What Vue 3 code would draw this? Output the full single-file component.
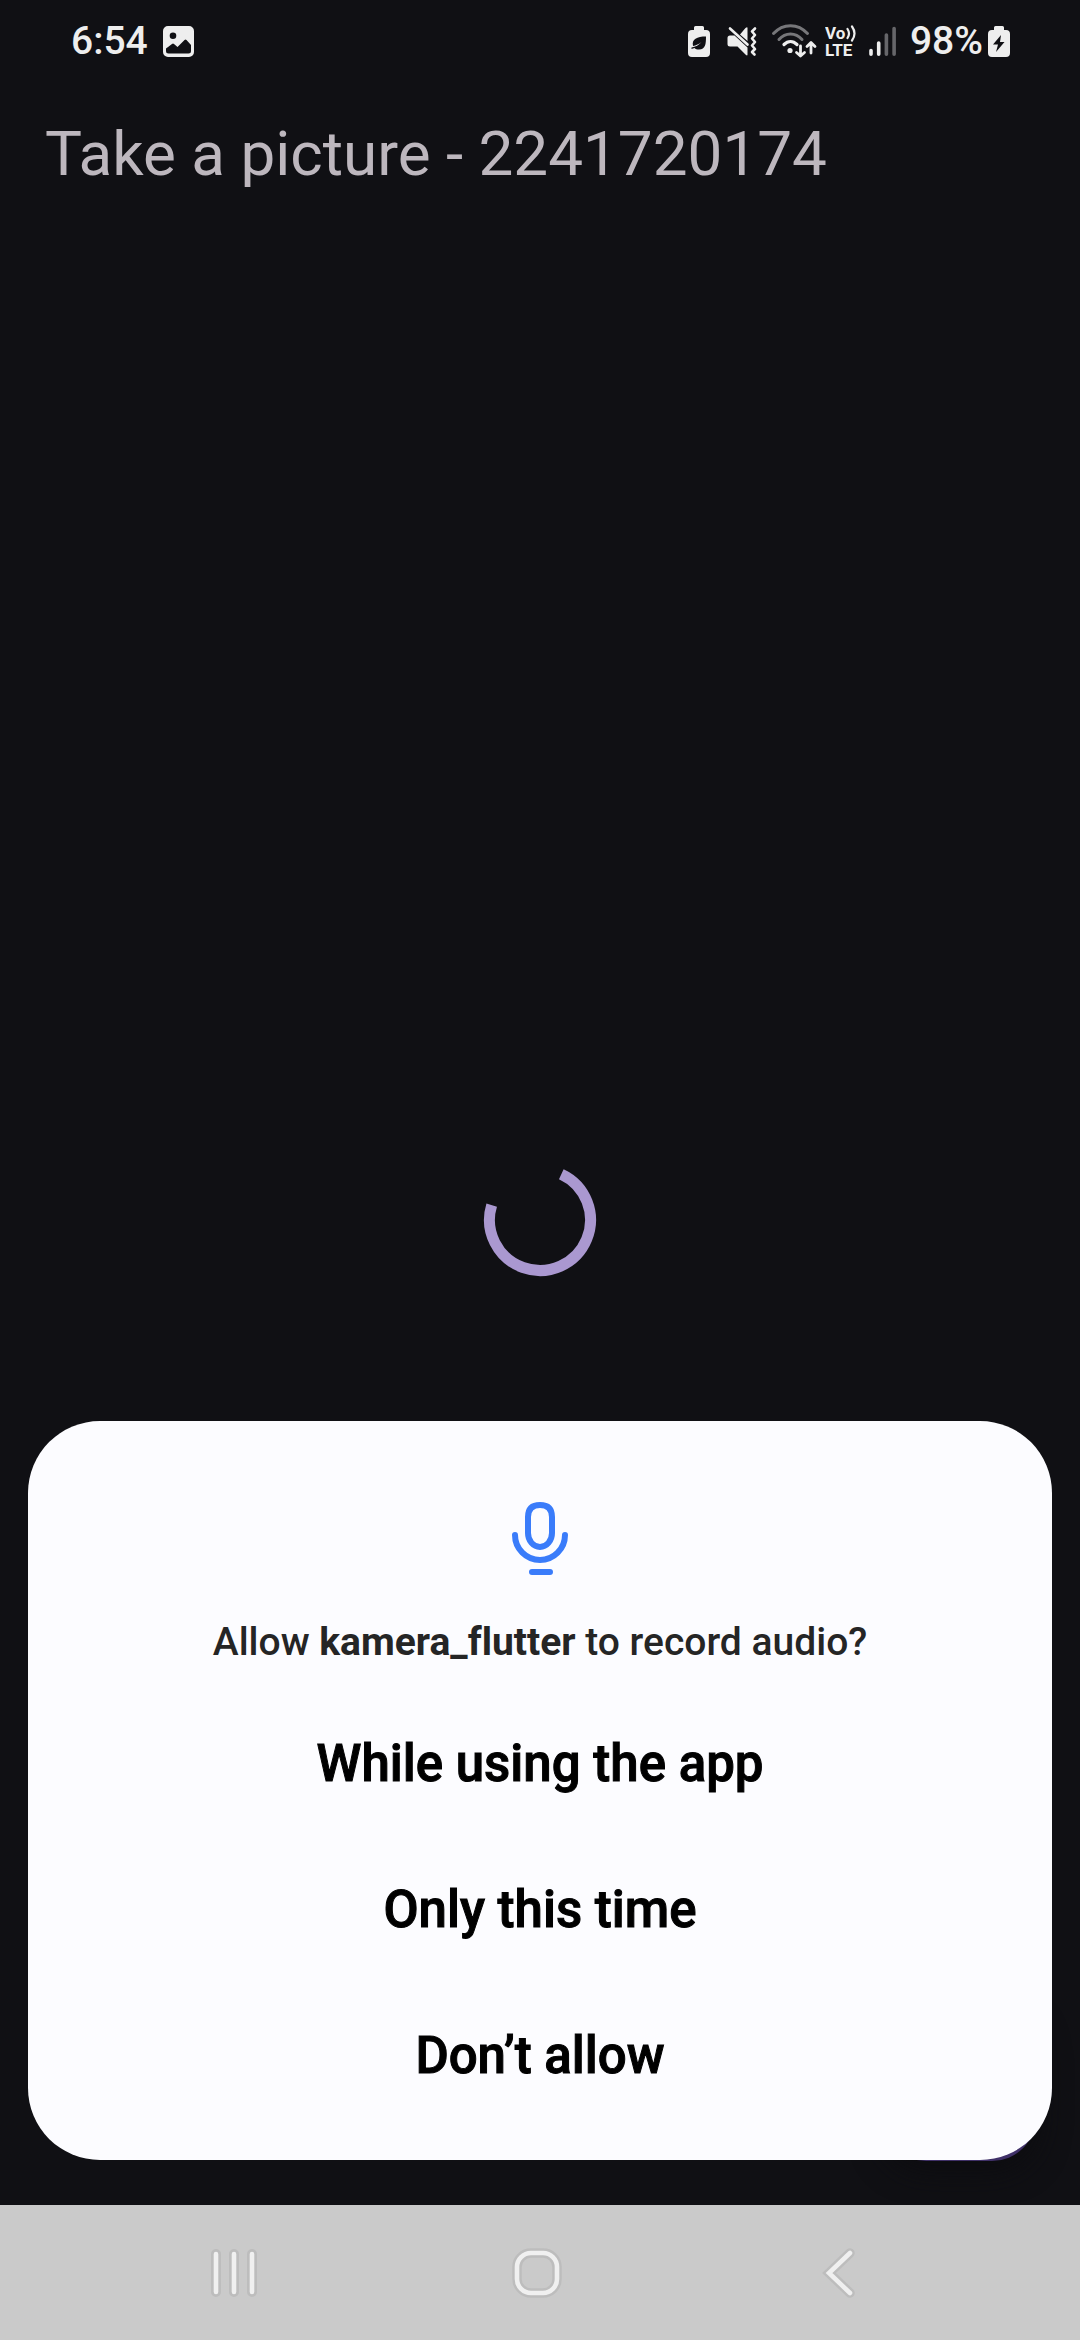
<script setup>
const choices = ['While using the app', 'Only this time', 'Don’t allow']
</script>

<template>
  <div class="screen">
    <header class="status">
      <div class="group">
        <time class="clock">6:54</time>
        <svg class="photo" width="31" height="31" viewBox="0 0 31 31" aria-hidden="true">
          <path fill="#eeeeee" fill-rule="evenodd" d="M5 0H26A5 5 0 0 1 31 5V26A5 5 0 0 1 26 31H5A5 5 0 0 1 0 26V5A5 5 0 0 1 5 0ZM10 6.500A3.300 3.300 0 1 0 10 13.100A3.300 3.300 0 1 0 10 6.500ZM3 22.500V25A2.500 2.500 0 0 0 5.500 27.500H25.500A2.500 2.500 0 0 0 28 25V19L23.500 14Q22.500 13 21.500 14L14.500 21L11 18Q10 17 9 18Z" />
        </svg>
      </div>
      <div class="group">
        <svg class="saver" width="22" height="33" viewBox="0 0 22 33" aria-hidden="true">
          <path fill="#eeeeee" d="M7.500 1H14.500Q16 1 16 2.500V5H18A4 4 0 0 1 22 9V28A4 4 0 0 1 18 32H4A4 4 0 0 1 0 28V9A4 4 0 0 1 4 5H6V2.500Q6 1 7.500 1Z" />
          <path fill="#101014" d="M18 11.500C18 19 17.500 24.500 11 24.500C9 24.500 7.500 24 6.500 23L3.500 24V22.500C7.500 22 11 20 13.500 17C11 19 8 20.500 5 21C3.500 14 9 11.500 18 11.500Z" />
        </svg>
        <svg class="mute" width="30" height="31" viewBox="0 0 30 31" aria-hidden="true">
          <path fill="#eeeeee" d="M20.500 2V15L13 8.500L18.500 2Q20.500 0.500 20.500 2ZM3 9.500H7.500L20.500 21.500V28.500Q20.500 30 19 29L10.500 20.500H3Q0.500 20.500 0.500 18V12Q0.500 9.500 3 9.500Z" />
          <path d="M3 2.500L20.500 18.500" fill="none" stroke="#eeeeee" stroke-width="2.600" stroke-linecap="round" />
          <path d="M28 2.500L25 5.500L28 9L25 12.500L28 16L25 19.500L28 23L25 26L27.500 28.500" fill="none" stroke="#eeeeee" stroke-width="2.600" stroke-linecap="round" stroke-linejoin="round" />
        </svg>
        <svg class="wifi" width="46" height="34" viewBox="0 0 46 34" fill="none" stroke-linecap="round" stroke-linejoin="round" aria-hidden="true">
          <path d="M2.500 9.500C12 -1 27 -1 36.500 9.500" stroke="#77777a" stroke-width="3" />
          <path d="M8 15.500C14.500 8 24.500 8 31 15.500" stroke="#77777a" stroke-width="3" />
          <path d="M13 20.500C17 16.500 22 16.500 26 20.500" stroke="#eeeeee" stroke-width="3.200" />
          <circle cx="19" cy="26.500" r="2.600" fill="#eeeeee" />
          <path d="M29.500 22V32M25.500 28.500L29.500 32L33.500 28.500M40 29V19M36 22.500L40 18.500L44 22.500" stroke="#eeeeee" stroke-width="2.800" />
        </svg>
        <svg class="volte" width="32" height="46" viewBox="0 -7 32 46" role="img" aria-label="VoLTE">
          <text x="0" y="14" class="net">Vo</text>
          <text x="0" y="31" class="net">LTE</text>
          <path d="M22.500 4Q25.500 8.500 22.500 13M27 1.500Q32 8.500 27 15.500" fill="none" stroke="#eeeeee" stroke-width="2.200" stroke-linecap="round" />
        </svg>
        <svg class="signal" width="28" height="31" viewBox="0 0 28 31" fill="none" stroke-width="3.600" stroke-linecap="round" aria-hidden="true">
          <path d="M2 24.500V28.200M9.700 17V28.200" stroke="#eeeeee" />
          <path d="M17.400 9V28.200M25.100 2.500V28.200" stroke="#66666a" />
        </svg>
        <span class="percent">98%</span>
        <svg width="22" height="33" viewBox="0 0 22 33" aria-hidden="true">
          <path fill="#eeeeee" d="M7.500 1H14.500Q16 1 16 2.500V5H18A4 4 0 0 1 22 9V28A4 4 0 0 1 18 32H4A4 4 0 0 1 0 28V9A4 4 0 0 1 4 5H6V2.500Q6 1 7.500 1Z" />
          <path fill="#101014" d="M13 10L5 19.500H10L8 27L16.500 17H12Z" />
        </svg>
      </div>
    </header>

    <h1 class="title">Take a picture - 2241720174</h1>

    <main class="body">
      <svg class="spinner" width="114" height="114" viewBox="-57 -57 114 114" role="img" aria-label="Loading">
        <path d="M21.300 -45.800A50.500 50.500 0 1 1 -48.300 -14.800" fill="none" stroke="#aa98d0" stroke-width="11" />
      </svg>

      <button class="fab" type="button" aria-label="Take picture"></button>

      <section class="sheet" role="dialog" aria-labelledby="question">
        <svg class="mic" width="58" height="76" viewBox="0 0 58 76" fill="none" stroke="#3a7cfa" stroke-width="6" stroke-linecap="round" aria-hidden="true">
          <path d="M17 16Q17 4 29 4Q41 4 41 16V32A12 14 0 0 1 17 32Z" />
          <path d="M4 34A25 25 0 0 0 54 34M21 71H39" />
        </svg>
        <p id="question" class="question">Allow <strong>kamera_flutter</strong> to record audio?</p>
        <button v-for="choice in choices" :key="choice" type="button" class="choice">{{ choice }}</button>
      </section>
    </main>

    <nav class="nav">
      <button type="button" class="key" aria-label="Recent apps">
        <svg width="60" height="60" viewBox="0 0 60 60" fill="none" stroke-linecap="round">
          <path d="M12 11V49M30 11V49M48 11V49" stroke="#bdbdbd" stroke-width="10" />
          <path d="M12 11V49M30 11V49M48 11V49" stroke="#f0f0f0" stroke-width="4.600" />
        </svg>
      </button>
      <button type="button" class="key" aria-label="Home">
        <svg width="60" height="60" viewBox="0 0 60 60" fill="none">
          <rect x="10" y="10" width="40" height="40" rx="14" stroke="#bdbdbd" stroke-width="9.500" />
          <rect x="10" y="10" width="40" height="40" rx="14" stroke="#f0f0f0" stroke-width="4.600" />
        </svg>
      </button>
      <button type="button" class="key" aria-label="Back">
        <svg width="60" height="60" viewBox="0 0 60 60" fill="none" stroke-linecap="round">
          <path d="M40 10L19 30L40 50" stroke="#bdbdbd" stroke-width="9.500" />
          <path d="M40 10L19 30L40 50" stroke="#f0f0f0" stroke-width="4.600" />
        </svg>
      </button>
    </nav>
  </div>
</template>

<style>
body {
  margin: 0;
  background: #101014;
}
</style>

<style scoped>
.screen {
  display: flex;
  flex-direction: column;
  min-height: 100vh;
  background: #101014;
  font-family: Roboto, 'Liberation Sans', sans-serif;
}

.status {
  display: flex;
  justify-content: space-between;
  align-items: center;
  box-sizing: border-box;
  height: 90px;
  padding: 0 70px 8px 71px;
  color: #eeeeee;
  font-size: 39px;
  font-weight: 500;
  line-height: 48px;
}

.group {
  display: flex;
  align-items: center;
}

.photo {
  margin-left: 15px;
}

.saver {
  margin-right: 17px;
}

.mute {
  margin-right: 14px;
}

.wifi {
  margin-right: 8px;
}

.volte {
  margin-right: 12px;
}

.signal {
  margin-right: 13px;
}

.percent {
  margin-right: 5px;
}

.net {
  fill: #eeeeee;
  font-size: 17px;
  font-weight: 700;
}

.title {
  box-sizing: border-box;
  height: 145px;
  margin: 0;
  padding: 0 45px;
  color: #bdb7be;
  font-size: 62px;
  font-weight: 400;
  line-height: 128px;
}

.body {
  position: relative;
  display: flex;
  flex: 1;
  align-items: center;
  justify-content: center;
}

.fab {
  position: absolute;
  right: 44px;
  bottom: 44px;
  width: 154px;
  height: 154px;
  padding: 0;
  border: 0;
  border-radius: 44px;
  background: #3f3068;
  box-shadow: 0 8px 32px #0c0c0f;
}

.sheet {
  position: absolute;
  right: 28px;
  bottom: 45px;
  left: 28px;
  display: flex;
  flex-direction: column;
  align-items: center;
  box-sizing: border-box;
  padding: 80px 60px 32px;
  border-radius: 72px;
  background: #fcfcff;
}

.question {
  margin: 37px 0 20px;
  color: #252525;
  font-size: 39px;
  font-weight: 500;
  font-variant-ligatures: none;
  line-height: 56px;
  text-align: center;
}

.question strong {
  font-weight: 700;
}

.choice {
  width: 100%;
  height: 146px;
  padding: 0;
  border: 0;
  background: transparent;
  color: #000000;
  font-family: inherit;
  font-size: 51px;
  font-weight: 500;
  -webkit-text-stroke: 1px #000000;
}

.nav {
  display: flex;
  align-items: center;
  justify-content: space-between;
  height: 135px;
  padding: 0 16.7% 0 16.1%;
  background: #cacaca;
}

.key {
  display: flex;
  align-items: center;
  justify-content: center;
  width: 120px;
  height: 120px;
  padding: 0;
  border: 0;
  background: transparent;
}
</style>
